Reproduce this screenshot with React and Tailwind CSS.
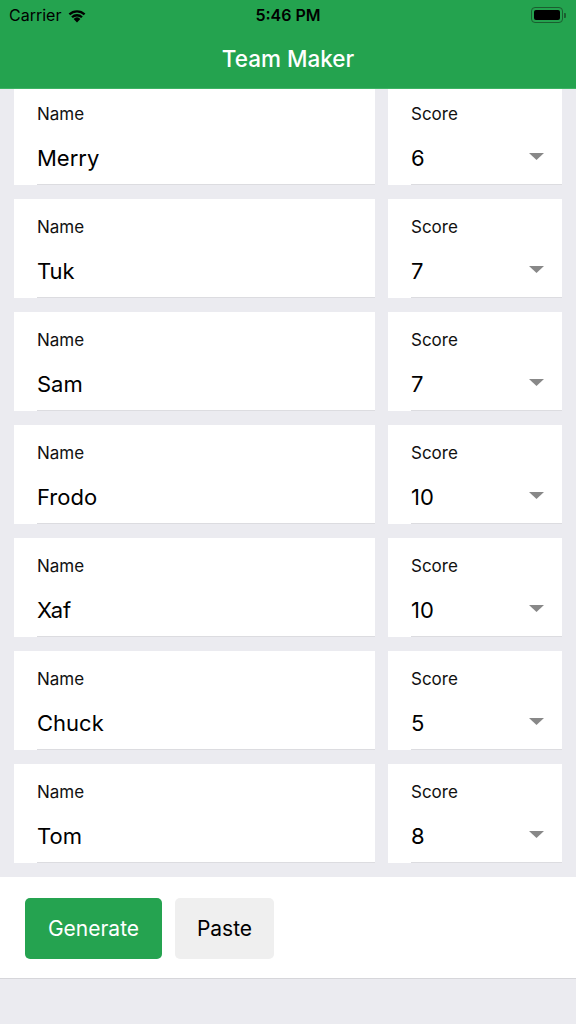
import React from 'react';

const players = [
  { name: 'Merry', score: 6 },
  { name: 'Tuk', score: 7 },
  { name: 'Sam', score: 7 },
  { name: 'Frodo', score: 10 },
  { name: 'Xaf', score: 10 },
  { name: 'Chuck', score: 5 },
  { name: 'Tom', score: 8 },
];

function Wifi() {
  return (
    <svg width="20" height="15" viewBox="0 0 20 15" className="ml-[6px]">
      <path d="M10 14.5 L6.6 10.9 A5 5 0 0 1 13.4 10.9 Z" fill="#000" />
      <path d="M4.2 8.4 A8.4 8.4 0 0 1 15.8 8.4 L14.2 10.1 A6.1 6.1 0 0 0 5.8 10.1 Z" fill="#000" />
      <path d="M1.6 5.6 A12.2 12.2 0 0 1 18.4 5.6 L16.8 7.3 A9.9 9.9 0 0 0 3.2 7.3 Z" fill="#000" />
    </svg>
  );
}

function Battery() {
  return (
    <div className="flex items-center">
      <div className="w-[32px] h-[16px] rounded-[4px] border border-[#1b5e30] p-[2px]">
        <div className="w-full h-full rounded-[2px] bg-black" />
      </div>
      <div className="w-[2px] h-[5px] rounded-r-[1px] bg-[#1b5e30] ml-[1px]" />
    </div>
  );
}

function Field({ label, value, select, className }) {
  return (
    <div className={`bg-white h-[99px] pl-[23px] flex flex-col ${className}`}>
      <div className="pt-[17px] text-[17px] leading-[22px] text-[#111]">{label}</div>
      <div className="relative flex-1 border-b-[1.5px] border-[#dcdce0] pt-[19px] text-[22px] leading-[28px] text-black">
        {value}
        {select && (
          <svg width="15" height="7" viewBox="0 0 15 7" className="absolute right-[18px] top-[28px]">
            <path d="M0 0 H15 L7.5 7 Z" fill="#888" />
          </svg>
        )}
      </div>
    </div>
  );
}

export default function App() {
  return (
    <div className="w-[576px] h-[1024px] bg-[#ebebf0] flex flex-col overflow-hidden font-['Inter',sans-serif]">
      <div className="h-[89px] bg-[#24a34f] border-b border-[#3db364] shrink-0 flex flex-col">
        <div className="h-[30px] relative flex items-center px-[9px]">
          <div className="flex items-center text-[16px] text-black">
            Carrier
            <Wifi />
          </div>
          <div className="absolute left-0 right-0 text-center text-[16px] font-semibold text-black">5:46 PM</div>
          <div className="ml-auto mr-[1px]">
            <Battery />
          </div>
        </div>
        <div className="flex-1 flex items-center justify-center pb-[1px] text-white text-[22.5px] font-medium">
          Team Maker
        </div>
      </div>

      <div className="h-[788px] overflow-hidden shrink-0">
        <div className="-mt-[3px] px-[14px] flex flex-col gap-[14px]">
          {players.map((p) => (
            <div key={p.name} className="flex gap-[13px]">
              <Field label="Name" value={p.name} className="flex-1" />
              <Field label="Score" value={p.score} select className="w-[174px]" />
            </div>
          ))}
        </div>
      </div>

      <div className="h-[102px] bg-white border-b border-[#d6d6da] shrink-0 flex items-start gap-[13px] pl-[25px] pt-[21px]">
        <button className="h-[61px] w-[137px] rounded-[5px] bg-[#25a350] text-white text-[21px]">Generate</button>
        <button className="h-[61px] w-[99px] rounded-[5px] bg-[#efefef] text-black text-[21px]">Paste</button>
      </div>
    </div>
  );
}
